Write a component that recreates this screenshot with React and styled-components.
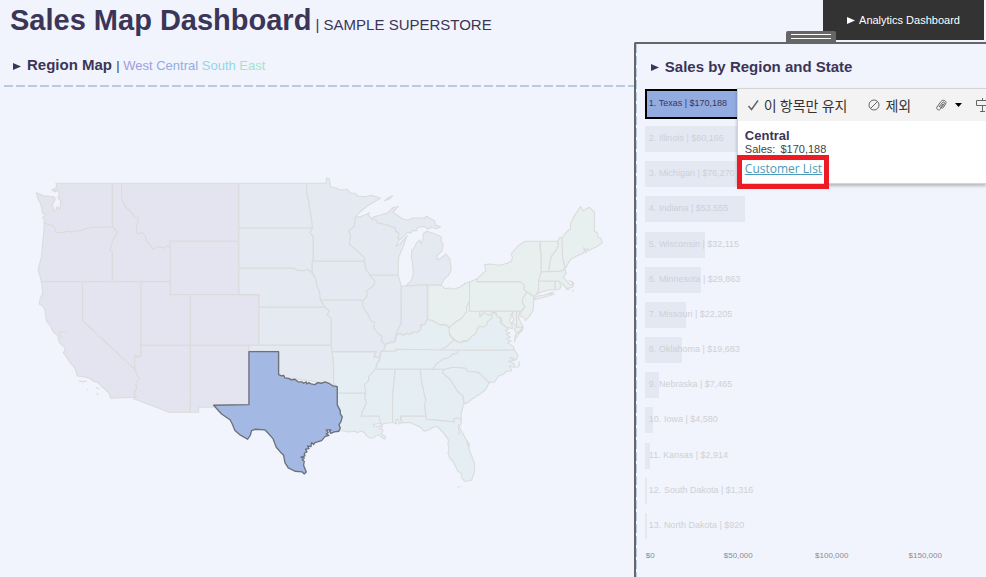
import React from "react";
import styled, { createGlobalStyle } from "styled-components";

const GlobalStyle = createGlobalStyle`
  *, *::before, *::after { box-sizing: border-box; }
  body {
    margin: 0;
    background: #f1f4fc;
    color: #3b3558;
    font-family: "Liberation Sans", Arial, sans-serif;
  }
`;

const Page = styled.div`
  display: grid;
  grid-template-columns: minmax(0, 9fr) minmax(0, 5fr);
  min-height: 100vh;
`;

const MapColumn = styled.main`
  display: flex;
  flex-direction: column;
`;

const Title = styled.h1`
  margin: 0;
  padding: 3px 0 0 10px;
  font-size: 29px;
  line-height: 34px;
  white-space: nowrap;
`;

const Subtitle = styled.span`
  font-size: 15px;
  font-weight: 400;
`;

const SectionTitle = styled.h2`
  display: flex;
  align-items: center;
  gap: 6px;
  margin: 0;
  padding-left: ${(p) => p.$inset}px;
  font-size: 15px;
  line-height: 20px;
  white-space: nowrap;
`;

const MapTitle = styled(SectionTitle)`
  margin-top: 13px;
`;

const Arrow = styled.svg`
  width: 8px;
  height: 8px;
  flex: none;
`;

const Legend = styled.span`
  font-size: 13px;
  font-weight: 400;
`;

const RegionName = styled.span`
  color: ${(p) => p.$color};
`;

const DashedRule = styled.hr`
  width: calc(100% - 4px);
  height: 2px;
  margin: 9px 0 0 4px;
  border: 0;
  background: repeating-linear-gradient(90deg, #b8c9e4 0 9px, transparent 9px 12px);
`;

const MapFrame = styled.div`
  padding: 83px 24px 0 30px;
`;

const MapSvg = styled.svg`
  display: block;
  width: 100%;
  stroke: #dbdbdb;
  stroke-width: 3.2;
  stroke-linejoin: round;
`;

const SideColumn = styled.aside`
  display: flex;
  flex-direction: column;
`;

const TopBar = styled.div`
  display: flex;
  justify-content: flex-end;
  height: 42px;
  padding-right: 2px;
`;

const DashboardButton = styled.button`
  display: flex;
  align-items: center;
  justify-content: center;
  gap: 4px;
  width: 161px;
  height: 40px;
  border: 0;
  background: #333;
  color: #fff;
  font: 11px "Liberation Sans", Arial, sans-serif;
`;

const Panel = styled.section`
  position: relative;
  flex: 1;
  border-top: 2px solid #666;
  border-left: 2px solid #666;
  border-top-left-radius: 2px;
  padding: 13px 0 0 9px;

  &::before {
    content: "";
    position: absolute;
    inset: 0 auto 0 0;
    width: 1px;
    background: repeating-linear-gradient(180deg, #b8c9e4 0 9px, #fff 9px 12px);
  }
`;

const DragTab = styled.button`
  position: absolute;
  top: -13px;
  left: 50%;
  transform: translateX(-50%);
  display: flex;
  flex-direction: column;
  gap: 3px;
  width: 50px;
  height: 12px;
  padding: 3px 5px;
  border: 0;
  border-radius: 2px 2px 0 0;
  background: #666;
`;

const GripLine = styled.span`
  height: 1px;
  background: #fff;
`;

const Chart = styled.div`
  position: relative;
  margin-top: 14px;
`;

const BarList = styled.ol`
  display: flex;
  flex-direction: column;
  justify-content: space-between;
  height: 448px;
  margin: 0;
  padding: 0;
  list-style: none;
`;

const BarRow = styled.li`
  position: relative;
  display: flex;
  align-items: center;
  height: 26px;
  font-size: 9px;
  color: ${(p) => (p.$selected ? "#3b3558" : "#cfd0d6")};
`;

const Bar = styled.span`
  position: absolute;
  inset: ${(p) => (p.$selected ? "-2px auto -2px 0" : "0 auto 0 0")};
  min-width: 2px;
  border: ${(p) => (p.$selected ? "2px solid #000" : "0")};
  background: ${(p) => (p.$selected ? "#92abe0" : "#e4e8f3")};
`;

const BarLabel = styled.span`
  position: relative;
  padding: 0 0 2px 4px;
  white-space: nowrap;
`;

const Axis = styled.div`
  display: grid;
  grid-template-columns: 13.7% repeat(3, 27.4%);
  margin-top: 11px;
  font-size: 8px;
  line-height: 12px;
  color: #8c8c92;
  text-align: center;
`;

const AxisOrigin = styled.span`
  padding-left: 1px;
  text-align: left;
`;

const Tooltip = styled.div`
  position: absolute;
  top: -3px;
  right: 0;
  left: 92px;
  border: 1px solid #d4d4d4;
  border-right: 0;
  background: #fff;
  box-shadow: 0 2px 3px rgba(0, 0, 0, 0.25);
  clip-path: inset(-4px 0 -8px -4px);
`;

const Toolbar = styled.div`
  display: flex;
  align-items: center;
  height: 32px;
  padding-left: 9px;
  background: #f3f3f3;
  overflow: hidden;
`;

const ToolButton = styled.button`
  display: flex;
  flex: none;
  align-items: center;
  gap: ${(p) => p.$gap || 5}px;
  margin-right: ${(p) => p.$after}px;
  padding: 0;
  border: 0;
  background: none;
  color: #333;
  font: 14px/20px "Noto Sans CJK KR", sans-serif;
  white-space: nowrap;
`;

const ToolIcon = styled.svg`
  width: ${(p) => p.$w || 12}px;
  height: ${(p) => p.$h || 12}px;
  flex: none;
  fill: none;
  stroke: #666;
`;

const TooltipBody = styled.div`
  height: 62px;
  padding: 7px;
`;

const TooltipTitle = styled.div`
  font-size: 13px;
  font-weight: 700;
  line-height: 15px;
`;

const TooltipText = styled.div`
  display: flex;
  gap: 5px;
  font-size: 11px;
  line-height: 13px;
  color: #444;
`;

const LinkHighlight = styled.div`
  position: absolute;
  top: 66px;
  left: -1px;
  width: 92px;
  height: 34px;
  border: 5px solid #ed1c24;
  padding: 0 3px;
`;

const TooltipLink = styled.a`
  display: block;
  color: #4a9ab8;
  font: 12px/17px "Open Sans", "Noto Sans", sans-serif;
  text-decoration-thickness: 1px;
  white-space: nowrap;
`;

const legend = [
  ["West", "#a39ae0"],
  ["Central", "#92abe0"],
  ["South", "#92d6e8"],
  ["East", "#9fe5d0"],
];

const sales = [
  ["Texas", 170188],
  ["Illinois", 80166],
  ["Michigan", 76270],
  ["Indiana", 53555],
  ["Wisconsin", 32115],
  ["Minnesota", 29863],
  ["Missouri", 22205],
  ["Oklahoma", 19683],
  ["Nebraska", 7465],
  ["Iowa", 4580],
  ["Kansas", 2914],
  ["South Dakota", 1316],
  ["North Dakota", 920],
];

const axisMax = 182400;

/* State outlines, grouped by sales region; each group has its own origin. */
const regions = [
  {
    name: "South",
    fill: "#e4eef3",
    origin: "960 990",
    states: {
      Virginia:
        "M358 61L380 50L402 30L418 38L444 32L456 18L466 12L476-12L490-12L502-24L516-36L514-48L530-48L538-38L544-32L540-22L552-14L566-2L556 2L570 10L558 12L572 22L560 26L574 34L564 38L580 50L584 61Z",
      Kentucky:
        "M184 64L228 64L228 58L358 61L380 50L402 30L388 14L392-2L378-16L360-16L342-26L322-32L316-18L304-14L302-2L290 8L284 4L270 14L262 10L250 16L240 10L230 16L226 34L212 40L198 42L194 54Z",
      Tennessee:
        "M184 64L228 64L228 58L416 61L412 70L400 72L386 84L372 86L350 102L338 118L166 118L172 108L170 100L180 92Z",
      Arkansas:
        "M37 65L166 65L162 82L178 82L174 96L170 102L166 118L154 132L146 140L148 150L134 164L138 178L136 190L52 190L52 170L41 160L41 110Z",
      Mississippi:
        "M166 118L226 118L218 200L218 278L196 280L186 284L178 272L178 259L124 259L126 248L140 216L134 206L138 190L134 164L148 150L146 140L154 132Z",
      Louisiana:
        "M52 190L136 190L134 206L140 216L126 248L124 259L178 259L182 280L170 282L160 284L162 290L176 290L184 284L188 290L178 296L190 300L184 312L198 320L194 328L180 318L174 314L160 324L148 324L140 318L134 308L124 304L112 308L104 304L86 306L62 302L56 290L66 262L60 244L52 228Z",
      Alabama:
        "M226 118L301 118L306 160L318 212L314 224L316 240L318 259L242 259L242 270L246 278L238 282L234 268L228 270L230 282L218 278L218 200Z",
      Georgia:
        "M301 118L374 118L368 128L392 150L416 188L428 196L432 220L424 250L424 268L410 264L404 276L384 274L320 268L316 240L314 224L318 212L306 160Z",
      SouthCarolina:
        "M368 128L374 118L398 112L436 114L444 124L474 126L508 158L498 178L484 190L468 200L456 208L444 218L434 222L428 196L416 188L392 150Z",
      NorthCarolina:
        "M338 118L350 102L372 86L386 84L400 72L412 70L416 61L584 61L594 76L590 90L570 82L584 92L566 94L584 102L586 112L568 108L576 122L560 124L552 132L536 138L524 156L508 158L474 126L444 124L436 114L398 112L374 118Z",
      Florida:
        "M242 259L318 259L320 268L384 274L404 276L402 266L410 264L424 268L424 280L418 292L440 330L448 342L448 360L464 400L464 424L458 444L454 452L434 454L424 442L426 432L414 424L404 404L400 394L392 388L384 370L388 356L384 342L386 330L370 308L352 290L340 292L328 300L312 304L304 294L294 288L270 278L246 278Z",
      Keys: "M412 472L418 470M422 470L425 468",
      BarrierIslands: "M598 94L598 108L590 114",
      Lakes: "M416 282L418 314M440 334L446 352",
    },
  },
  {
    name: "West",
    fill: "#e4e4f0",
    origin: "90 510",
    states: {
      Washington:
        "M78 40L247 40L247 160L250 172L190 172L165 177L150 183L138 182L125 186L112 184L98 188L80 188L76 184L74 174L66 166L50 162L42 158L44 150L38 144L46 132L38 130L36 120L32 102L24 86L19 68L40 77L72 80L76 88L70 98L66 108L72 116L68 122L76 124L82 110L90 118L92 92L84 84L88 70L82 60L76 66L66 60L78 54L80 46Z",
      Oregon:
        "M42 158L50 162L66 166L74 174L76 184L80 188L98 188L112 184L125 186L138 182L150 183L165 177L190 172L250 172L262 186L256 200L250 208L240 238L247 246L247 335L34 335L30 318L24 300L34 262L38 220L42 180Z",
      Idaho:
        "M247 40L275 40L275 88L284 102L284 108L306 128L312 140L324 144L324 154L320 170L319 188L328 192L338 186L346 196L350 214L362 226L368 238L384 230L404 234L412 226L421 234L421 335L247 335L247 246L240 238L250 208L256 200L262 186L247 168Z",
      Montana:
        "M275 40L627 40L627 214L421 214L421 234L412 226L404 234L384 230L368 238L362 226L350 214L346 196L338 186L328 192L319 188L320 170L324 154L324 144L312 140L306 128L284 108L284 102L275 88Z",
      Wyoming: "M421 214H627V374H421Z",
      California:
        "M34 335L158 335L158 452L315 598L320 612L328 624L318 640L320 656L312 672L320 678L312 682L242 685L236 668L218 652L204 638L190 634L180 626L168 622L142 618L138 604L134 594L122 580L106 556L100 548L106 540L102 530L90 520L84 508L84 498L70 486L60 466L50 454L46 436L46 422L38 408L28 402L30 388L38 370L36 350Z",
      BayArea: "M84 486L112 486M88 488L94 506",
      ChannelIslands: "M146 632L156 636L170 633M172 658L174 661M198 653L208 657M200 670L206 675",
      Nevada: "M158 335L333 335L333 556L326 562L314 556L315 598L158 452Z",
      Utah: "M333 335H421V374H481V526H333Z",
      Colorado: "M481 374H687V526H481Z",
      Arizona:
        "M333 526L481 526L481 727L418 727L310 686L320 678L312 672L320 656L318 640L328 624L320 612L315 598L314 556L326 562L333 556Z",
      NewMexico: "M481 526H658V703H551V712H506V727H481Z",
    },
  },
  {
    name: "Central",
    fill: "#e4e9f2",
    origin: "690 510",
    states: {
      NorthDakota: "M27 40L230 40L230 70L236 90L238 110L244 140L248 174L27 174Z",
      SouthDakota:
        "M27 174L248 174L240 188L250 200L250 274L246 282L247 306L232 298L222 302L206 302L190 295L27 295Z",
      Nebraska:
        "M27 295L190 295L206 302L222 302L232 298L247 312L258 328L262 350L268 362L272 392L286 412L87 412L87 374L27 374Z",
      Kansas: "M87 412L286 412L298 422L292 434L304 446L304 526L87 526Z",
      Oklahoma: "M57 526L304 526L307 546L311 590L311 650L290 640L146 620L146 544L57 544Z",
      Minnesota:
        "M230 40L289 40L289 24L298 26L302 50L318 54L330 60L352 58L362 70L376 70L384 78L404 80L424 76L452 84L440 92L412 108L390 126L376 142L374 168L356 184L362 196L358 222L374 236L392 252L403 262L403 274L250 274L250 200L240 188L248 174L244 140L238 110L236 90L230 70Z",
      Wisconsin:
        "M376 142L392 140L420 128L414 134L424 146L438 150L442 158L470 164L496 174L498 184L508 190L504 204L510 206L498 230L512 220L532 196L520 230L506 262L505 290L505 316L420 316L408 300L405 274L403 262L392 252L374 236L358 222L362 196L356 184L374 168Z",
      UpperPeninsula:
        "M424 146L432 140L450 136L462 132L474 128L490 112L506 110L498 116L490 128L506 138L520 148L534 150L550 144L586 144L588 138L614 152L616 164L632 170L620 176L604 172L594 178L584 170L574 170L562 174L560 182L548 182L542 190L534 186L520 200L510 210L504 200L508 190L498 184L496 174L470 164L442 158L438 150Z",
      IsleRoyale: "M464 92L474 84L488 77L480 86Z",
      Michigan:
        "M590 184L610 190L634 200L634 214L640 222L636 244L622 256L622 270L634 264L648 252L660 268L664 300L656 316L644 326L634 344L592 346L528 348L544 332L550 312L548 282L544 260L546 240L552 236L560 218L570 210L574 222L580 206L580 192Z",
      Iowa: "M247 274L403 274L408 300L422 316L436 334L430 348L410 362L412 378L398 394L390 390L272 390L268 362L262 350L258 328L247 306Z",
      Missouri:
        "M272 390L390 390L398 394L400 412L418 440L422 452L434 456L432 474L444 490L456 498L454 512L466 524L462 540L452 545L448 562L432 560L440 545L307 545L304 526L304 446L292 434L298 422L286 412Z",
      Illinois:
        "M420 316L505 316L514 348L514 462L506 474L498 496L492 518L482 514L466 524L454 512L456 498L444 490L432 474L434 456L422 452L418 440L400 412L398 394L412 378L410 362L430 348L436 334Z",
      Indiana:
        "M514 348L528 348L592 344L592 448L582 466L572 464L572 480L560 488L552 484L540 494L532 490L520 496L510 490L498 496L506 474L514 462Z",
    },
  },
  {
    name: "East",
    fill: "#e7f0ef",
    origin: "1200 570",
    states: {
      Ohio: "M84 286L124 286L136 296L148 294L160 298L180 292L196 280L209 276L209 334L200 352L200 366L186 384L168 396L154 414L138 404L120 404L102 394L84 388Z",
      WestVirginia:
        "M209 334L209 364L240 364L240 380L252 368L266 376L274 372L276 384L262 396L262 404L250 412L236 408L226 432L216 438L204 452L190 452L178 458L158 444L148 428L148 414L154 408L168 396L186 384L200 366L200 352Z",
      Pennsylvania:
        "M209 276L232 266L232 275L362 275L374 286L372 298L382 306L368 326L368 340L376 350L362 364L209 364Z",
      NewYork:
        "M232 266L258 242L254 224L270 222L300 226L322 220L334 214L338 202L334 192L354 168L376 154L421 154L420 170L424 200L424 246L416 274L416 306L404 320L382 306L372 298L374 286L362 275L232 275Z",
      LongIsland: "M400 330L412 318L432 316L460 306L450 312L464 312L432 322Z",
      Vermont: "M421 154L474 154L476 166L468 182L454 200L446 244L424 246L424 200Z",
      NewHampshire: "M474 154L480 142L487 144L488 200L496 236L482 244L446 244L454 200L468 182L476 166Z",
      Maine:
        "M487 142L500 126L512 116L512 100L522 80L542 50L550 62L568 52L584 66L584 124L594 130L594 142L602 144L608 158L594 168L582 174L574 178L566 182L562 176L560 188L552 172L554 186L546 192L530 198L520 204L512 208L504 222L496 236L488 200Z",
      Massachusetts:
        "M424 246L482 244L496 240L500 250L490 260L498 270L508 282L518 286L518 276L508 272L522 280L518 292L500 296L490 284L478 274L416 274Z",
      CapeIslands: "M500 300L508 298M516 302L522 302",
      Connecticut: "M416 274L466 274L466 298L448 300L430 304L408 314L416 304Z",
      RhodeIsland: "M466 274L478 274L484 290L478 298L466 300Z",
      NewJersey:
        "M382 306L400 318L402 334L400 360L388 380L376 392L374 384L358 376L364 366L376 350L368 340L368 326Z",
      Delaware: "M350 364L360 364L356 384L370 412L350 412Z",
      Maryland:
        "M240 364L350 364L350 412L370 412L366 424L350 430L344 420L346 406L336 400L342 386L336 376L340 366L332 374L334 384L328 390L336 404L338 416L320 412L306 400L304 384L292 380L288 368L276 368L274 372L266 376L252 368L240 380Z",
      EasternShore: "M366 416L360 428L348 444L344 456L346 434L352 430Z",
    },
  },
];

const texasPath =
  "M132 35L221 35L221 104L230 108L236 106L240 114L254 116L258 120L270 118L280 126L292 126L296 130L304 126L306 132L312 128L318 132L330 134L338 128L350 130L360 126L372 130L384 138L397 140L397 195L406 212L406 222L412 230L408 246L402 254L406 264L402 274L388 276L378 280L374 274L378 270L364 270L370 278L364 282L372 286L360 290L350 302L330 308L326 314L320 308L318 320L308 318L312 326L302 328L306 336L298 340L300 348L288 352L298 354L292 360L298 364L296 376L304 396L298 402L292 396L270 394L250 384L240 368L236 346L226 336L214 322L204 296L190 280L180 270L150 268L140 272L136 286L128 298L104 284L90 272L82 252L76 240L50 222L26 196L132 194Z";

const money = (n) => "$" + n.toLocaleString("en-US");

function TitleArrow() {
  return (
    <Arrow viewBox="0 0 8 8" aria-hidden="true">
      <path d="M0 1L8 4.5L0 8Z" fill="currentColor" />
    </Arrow>
  );
}

function RegionMap() {
  return (
    <MapSvg viewBox="90 510 1740 960" role="img" aria-label="Sales by state, Texas selected">
      {regions.map((region) => (
        <g key={region.name} transform={`translate(${region.origin})`} fill={region.fill}>
          {Object.entries(region.states).map(([state, d]) => (
            <path key={state} d={d} />
          ))}
        </g>
      ))}
      <path d={texasPath} transform="translate(615 1020)" fill="#a4b8e4" stroke="#6c7079" strokeWidth="4" />
    </MapSvg>
  );
}

function StateTooltip() {
  return (
    <Tooltip role="dialog" aria-label="Central">
      <Toolbar>
        <ToolButton $after={21}>
          <ToolIcon viewBox="0 0 12 12" aria-hidden="true">
            <path d="M1.5 7L4.5 10.5L11 1.5" strokeWidth="1.5" />
          </ToolIcon>
          이 항목만 유지
        </ToolButton>
        <ToolButton $after={24}>
          <ToolIcon viewBox="0 0 12 12" aria-hidden="true">
            <circle cx="6" cy="6" r="5" />
            <path d="M2.5 9.5L9.5 2.5" />
          </ToolIcon>
          제외
        </ToolButton>
        <ToolButton $after={14} $gap={8} aria-label="Group">
          <ToolIcon viewBox="0 0 12 12">
            <path d="M4 8L7.5 3.5C8.5 2.3 10 3.3 9.2 4.7L5.5 10C4 12 .7 10.5 2 8L6 2.5C8 0 12 1.5 10.7 4.8L7.5 9.5M5.2 8.8L8 5" />
          </ToolIcon>
          <ToolIcon $w={7} $h={4} viewBox="0 0 7 4">
            <path d="M0 0H7L3.5 4Z" fill="#000" stroke="none" />
          </ToolIcon>
        </ToolButton>
        <ToolButton $after={0} aria-label="Create set">
          <ToolIcon $w={15} $h={14} viewBox="0 0 15 14">
            <path d="M.5 2.5H12L14.5 5L12 7.5H.5ZM6.5 0V2.5M6.5 7.5V13.5M4 13.5H9" />
          </ToolIcon>
        </ToolButton>
      </Toolbar>
      <TooltipBody>
        <TooltipTitle>Central</TooltipTitle>
        <TooltipText>
          <span>Sales:</span>
          <span>$170,188</span>
        </TooltipText>
      </TooltipBody>
      <LinkHighlight>
        <TooltipLink href="#customers">Customer List</TooltipLink>
      </LinkHighlight>
    </Tooltip>
  );
}

export default function App() {
  return (
    <>
      <GlobalStyle />
      <Page>
        <MapColumn>
          <Title>
            Sales Map Dashboard<Subtitle> | SAMPLE SUPERSTORE</Subtitle>
          </Title>
          <MapTitle $inset={13}>
            <TitleArrow />
            <span>
              Region Map{" "}
              <Legend>
                |{" "}
                {legend.map(([name, color]) => (
                  <RegionName key={name} $color={color}>
                    {name}{" "}
                  </RegionName>
                ))}
              </Legend>
            </span>
          </MapTitle>
          <DashedRule />
          <MapFrame>
            <RegionMap />
          </MapFrame>
        </MapColumn>
        <SideColumn>
          <TopBar>
            <DashboardButton>
              <TitleArrow />
              Analytics Dashboard
            </DashboardButton>
          </TopBar>
          <Panel>
            <DragTab aria-label="Resize panel">
              <GripLine />
              <GripLine />
            </DragTab>
            <SectionTitle $inset={6}>
              <TitleArrow />
              Sales by Region and State
            </SectionTitle>
            <Chart>
              <BarList>
                {sales.map(([state, value], i) => (
                  <BarRow key={state} $selected={i === 0}>
                    <Bar $selected={i === 0} style={{ width: `${(value / axisMax) * 100}%` }} />
                    <BarLabel>
                      {i + 1}. {state} | {money(value)}
                    </BarLabel>
                  </BarRow>
                ))}
              </BarList>
              <Axis>
                <AxisOrigin>$0</AxisOrigin>
                <span>$50,000</span>
                <span>$100,000</span>
                <span>$150,000</span>
              </Axis>
              <StateTooltip />
            </Chart>
          </Panel>
        </SideColumn>
      </Page>
    </>
  );
}
